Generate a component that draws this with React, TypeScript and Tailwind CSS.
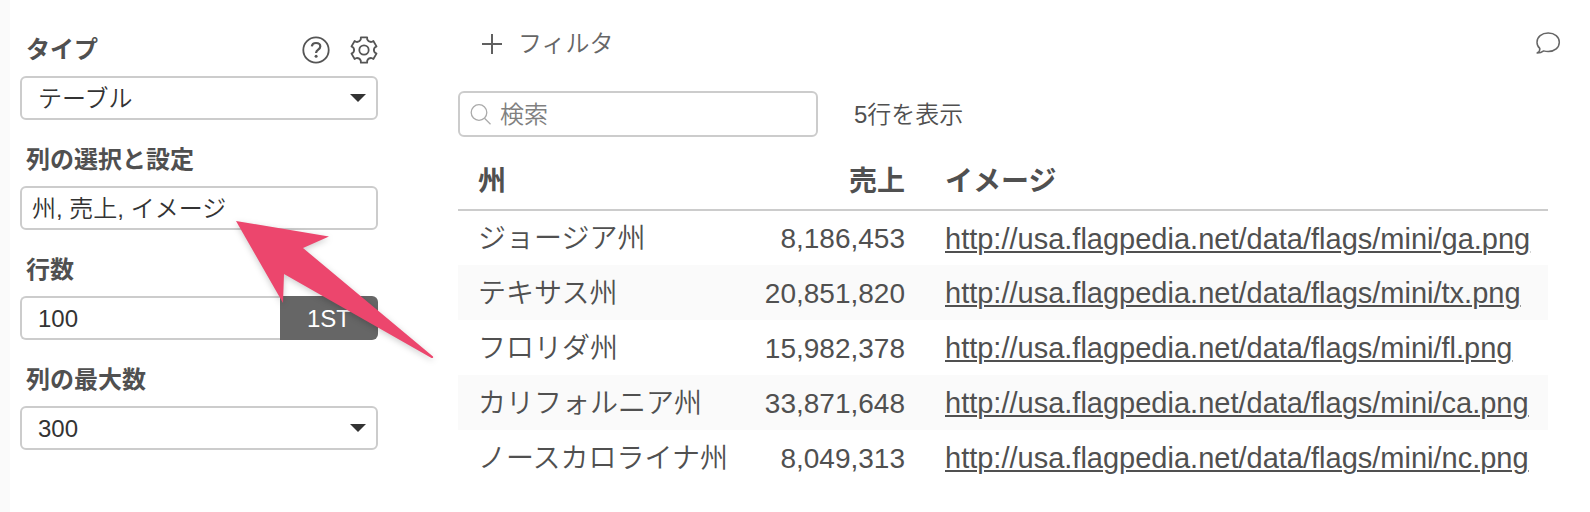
import type { ReactNode } from "react";

const states = [
  { name: "ジョージア州", sales: "8,186,453", code: "ga" },
  { name: "テキサス州", sales: "20,851,820", code: "tx" },
  { name: "フロリダ州", sales: "15,982,378", code: "fl" },
  { name: "カリフォルニア州", sales: "33,871,648", code: "ca" },
  { name: "ノースカロライナ州", sales: "8,049,313", code: "nc" },
];

const controlClass =
  "h-11 w-full min-w-0 appearance-none rounded-md border-2 border-[#ccc] bg-white text-2xl font-[350] text-[#333] outline-none";

function HelpIcon() {
  return (
    <svg viewBox="0 0 28 28" className="size-7" fill="none" stroke="#555" strokeWidth="1.8" aria-hidden="true">
      <circle cx="14" cy="14" r="12.7" />
      <path d="M9.800 10.400c.3-2.300 1.900-3.400 4.200-3.400 2.500 0 4.300 1.300 4.300 3.500 0 3.100-4.200 3.100-4.200 6.200v.4" strokeWidth="2.200" />
      <circle cx="14.100" cy="20.200" r="1.500" fill="#555" stroke="none" />
    </svg>
  );
}

function gearPoint(degrees: number, radius: number) {
  const a = (degrees * Math.PI) / 180;
  return `${(14 + radius * Math.sin(a)).toFixed(2)} ${(14 - radius * Math.cos(a)).toFixed(2)}`;
}

// Six flat teeth, joined by shallow curved valleys.
const gearPath =
  [0, 60, 120, 180, 240, 300]
    .map(
      (d, i) =>
        `${i === 0 ? "M" : "L"}${gearPoint(d - 14, 13)}L${gearPoint(d + 14, 13)}L${gearPoint(d + 17, 11)}Q${gearPoint(d + 30, 9)} ${gearPoint(d + 43, 11)}`,
    )
    .join("") + "Z";

function GearIcon() {
  return (
    <svg viewBox="0 0 28 28" className="size-7" fill="none" stroke="#555" strokeWidth="1.8" strokeLinejoin="round" aria-hidden="true">
      <path d={gearPath} />
      <circle cx="14" cy="14" r="4.700" />
    </svg>
  );
}

function SearchIcon() {
  return (
    <svg viewBox="0 0 22 22" className="size-[22px]" fill="none" stroke="#aaa" strokeWidth="1.300" aria-hidden="true">
      <circle cx="9" cy="9.500" r="7.800" />
      <path d="M14.500 15.300l6 6" />
    </svg>
  );
}

function CommentIcon() {
  return (
    <svg viewBox="0 0 26 24" className="h-6 w-[26px]" fill="none" stroke="#666" strokeWidth="1.500" strokeLinejoin="round" aria-hidden="true">
      <path d="M13.200 2C6.700 2 2 5.900 2 11.200c0 2.600.9 4.600 2.800 6.200.3 1.900-.8 3.500-2.600 4.600 2.900 0 4.700-.7 6.500-2.100 1.500.4 2.900.6 4.500.6 6.500 0 11.100-4 11.100-9.300S19.700 2 13.200 2z" />
    </svg>
  );
}

function Dropdown({ id, options }: { id: string; options: string[] }) {
  return (
    <div className="grid items-center">
      <select id={id} className={controlClass + " col-start-1 row-start-1 px-4 pt-[2px]"}>
        {options.map((o) => (
          <option key={o}>{o}</option>
        ))}
      </select>
      <svg viewBox="0 0 16 8" className="pointer-events-none col-start-1 row-start-1 mr-3 h-2 w-4 justify-self-end" aria-hidden="true">
        <path d="M0 0h16L8 8z" fill="#333" />
      </svg>
    </div>
  );
}

function Field({ id, label, actions, children }: { id: string; label: string; actions?: ReactNode; children: ReactNode }) {
  return (
    <div>
      <div className="mb-[10px] flex h-8 items-center justify-between pl-[6px]">
        <label htmlFor={id} className="text-2xl font-bold text-[#505050]">
          {label}
        </label>
        {actions}
      </div>
      {children}
    </div>
  );
}

export default function App() {
  return (
    <div
      lang="ja"
      className="flex min-h-screen bg-white font-['Liberation_Sans','Noto_Sans_CJK_JP',sans-serif] font-[350] text-[#505050]"
    >
      <div className="w-[10px] shrink-0 bg-[#fafafa]" />

      <aside className="relative w-[448px] shrink-0 pt-[34px] pr-20 pl-[10px]">
        <form className="flex flex-col gap-6">
          <Field
            id="type"
            label="タイプ"
            actions={
              <div className="flex gap-5">
                <button type="button" aria-label="ヘルプ">
                  <HelpIcon />
                </button>
                <button type="button" aria-label="設定">
                  <GearIcon />
                </button>
              </div>
            }
          >
            <Dropdown id="type" options={["テーブル"]} />
          </Field>
          <Field id="columns" label="列の選択と設定">
            <input id="columns" type="text" defaultValue="州, 売上, イメージ" className={controlClass + " px-[10px] pb-1"} />
          </Field>
          <Field id="rows" label="行数">
            <div className="flex">
              <input
                id="rows"
                type="text"
                defaultValue="100"
                className="h-11 min-w-0 flex-1 rounded-l-md border-2 border-r-0 border-[#ccc] bg-white px-4 pt-[2px] text-2xl text-[#333] outline-none"
              />
              <button type="button" className="h-11 w-[98px] rounded-r-md bg-[#666] pt-[2px] text-2xl text-white">
                1ST
              </button>
            </div>
          </Field>
          <Field id="max-columns" label="列の最大数">
            <Dropdown id="max-columns" options={["300"]} />
          </Field>
        </form>

        <svg
          viewBox="0 0 206 146"
          className="pointer-events-none absolute top-[216px] left-[222px] h-[146px] w-[206px] drop-shadow-[0_2px_3px_rgba(0,0,0,0.2)]"
          aria-hidden="true"
        >
          <path d="M4 5L97 20.500 71 32 201 140.500q.8 2-1.500 1.500L52 58 51 87z" fill="#ec466d" />
        </svg>
      </aside>

      <main className="min-w-0 flex-1">
        <header className="flex h-[91px] items-start justify-between pt-7 pr-[29px] pl-6">
          <button type="button" className="flex h-8 items-center gap-4 text-2xl text-[#666]">
            <svg viewBox="0 0 20 20" className="size-5" stroke="#606060" strokeWidth="2" aria-hidden="true">
              <path d="M10 0v20M0 10h20" />
            </svg>
            フィルタ
          </button>
          <button type="button" aria-label="コメント" className="flex h-[30px] items-center">
            <CommentIcon />
          </button>
        </header>

        <div className="pr-[42px]">
          <div className="flex items-center gap-9">
            <label className="flex h-[46px] w-[360px] items-center gap-2 rounded-md border-2 border-[#ccc] px-[10px]">
              <SearchIcon />
              <input
                type="text"
                aria-label="検索"
                placeholder="検索"
                className="min-w-0 flex-1 bg-transparent pt-[2px] text-2xl font-[350] outline-none placeholder:text-[#808080]"
              />
            </label>
            <p className="pt-[2px] text-2xl">5行を表示</p>
          </div>

          <table className="w-full table-fixed border-collapse text-[28px] leading-8">
            <thead>
              <tr className="h-[73px] border-b-2 border-[#ccc]">
                <th className="w-[267px] pt-[18px] pl-5 text-left">州</th>
                <th className="w-[200px] pt-[18px] pr-5 text-right">売上</th>
                <th className="pt-[18px] pl-5 text-left">イメージ</th>
              </tr>
            </thead>
            <tbody>
              {states.map((s) => (
                <tr key={s.code} className="h-[55px] even:bg-[#fafafa]">
                  <td className="pt-[2px] pl-5 whitespace-nowrap">{s.name}</td>
                  <td className="pt-[2px] pr-5 text-right">{s.sales}</td>
                  <td className="pt-[2px] pl-5">
                    <a
                      href={`http://usa.flagpedia.net/data/flags/mini/${s.code}.png`}
                      className="text-[29px] underline decoration-2 underline-offset-2"
                    >
                      {`http://usa.flagpedia.net/data/flags/mini/${s.code}.png`}
                    </a>
                  </td>
                </tr>
              ))}
            </tbody>
          </table>
        </div>
      </main>
    </div>
  );
}
